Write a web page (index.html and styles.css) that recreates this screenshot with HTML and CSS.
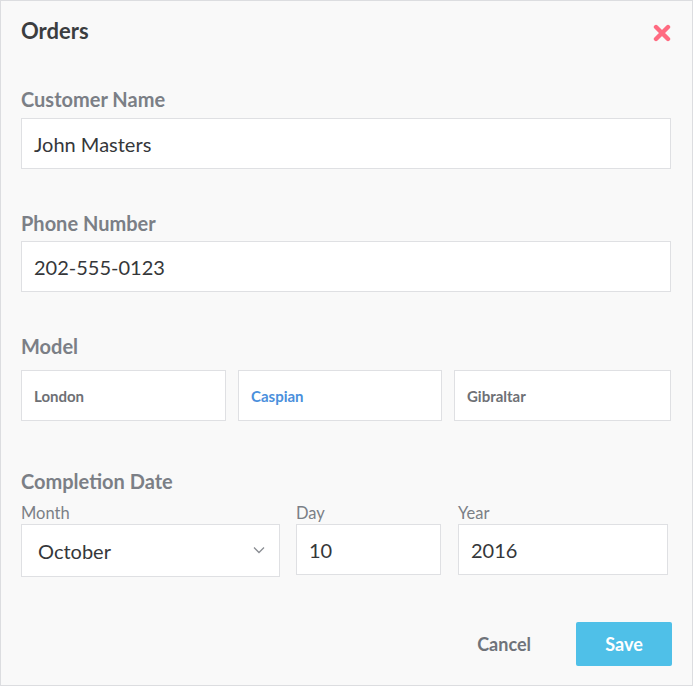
FILE: index.html
```html
<!DOCTYPE html>
<html>
<head>
<meta charset="utf-8">
<link rel="stylesheet" href="styles.css">
</head>
<body>
<div class="dialog">
  <div class="header">
    <h1 class="title">Orders</h1>
    <button class="close" aria-label="Close">
      <svg width="18" height="18" viewBox="0 0 18 18"><path d="M3 3 L15 15 M15 3 L3 15" stroke="#ff6b81" stroke-width="4.4" stroke-linecap="round"/></svg>
    </button>
  </div>

  <div class="group g-customer">
    <label class="label">Customer Name</label>
    <div class="input">John Masters</div>
  </div>

  <div class="group g-phone">
    <label class="label">Phone Number</label>
    <div class="input">202-555-0123</div>
  </div>

  <div class="group g-model">
    <label class="label label-model">Model</label>
    <div class="models">
      <div class="model">London</div>
      <div class="model active">Caspian</div>
      <div class="model">Gibraltar</div>
    </div>
  </div>

  <div class="group g-date">
    <label class="label">Completion Date</label>
    <div class="date-row">
      <div class="date-col">
        <span class="sublabel">Month</span>
        <div class="select">October
          <svg class="chev" width="12" height="8" viewBox="0 0 12 8"><path d="M1 1.5 L6 6.5 L11 1.5" fill="none" stroke="#8a8d93" stroke-width="1.3"/></svg>
        </div>
      </div>
      <div class="date-col">
        <span class="sublabel">Day</span>
        <div class="input small">10</div>
      </div>
      <div class="date-col col-year">
        <span class="sublabel">Year</span>
        <div class="input small">2016</div>
      </div>
    </div>
  </div>

  <div class="footer">
    <button class="btn-cancel">Cancel</button>
    <button class="btn-save">Save</button>
  </div>
</div>
</body>
</html>
```
FILE: styles.css
```css
* { box-sizing: border-box; }
html, body { margin: 0; padding: 0; }
body {
  font-family: Lato, "Noto Sans", "Liberation Sans", sans-serif;
  background: #ffffff;
}
.dialog {
  width: 693px;
  height: 686px;
  background: #f9f9f9;
  border: 1px solid #dcdde0;
  padding: 17px 21px 0 20px;
}
.header {
  display: flex;
  justify-content: space-between;
  align-items: center;
  height: 26px;
}
.title {
  margin: 0;
  font-size: 22px;
  line-height: 26px;
  font-weight: 700;
  color: #3b3d40;
}
.close {
  border: 0;
  background: none;
  padding: 0;
  width: 18px;
  height: 18px;
  margin-top: 4px;
  display: block;
}
.close svg { display: block; }
.label {
  display: block;
  font-size: 20px;
  line-height: 22px;
  font-weight: 700;
  color: #7b7f86;
}
.g-customer { margin-top: 44px; }
.g-phone { margin-top: 43px; }
.g-model { margin-top: 43px; }
.g-date { margin-top: 49px; }
.g-customer .label { margin-bottom: 8px; }
.g-phone .label { margin-bottom: 7px; }
.label-model { margin-bottom: 13px; }
.input {
  height: 51px;
  background: #fff;
  border: 1px solid #dfe0e3;
  padding: 0 12px;
  display: flex;
  align-items: center;
  font-size: 20px;
  color: #35373a;
}
.models {
  display: grid;
  grid-template-columns: 205px 204px 217px;
  column-gap: 12px;
}
.model {
  height: 51px;
  background: #fff;
  border: 1px solid #dfe0e3;
  padding: 0 12px;
  display: flex;
  align-items: center;
  font-size: 15px;
  font-weight: 700;
  color: #6e7075;
}
.model.active { color: #4a8fdc; }
.date-row {
  display: grid;
  grid-template-columns: 259px 145px 211px;
  column-gap: 16px;
  margin-top: 11px;
}
.col-year { margin-left: 1px; }
.date-col { display: flex; flex-direction: column; }
.sublabel {
  font-size: 16.5px;
  line-height: 20px;
  color: #7b7f86;
  margin-bottom: 1px;
}
.select {
  height: 53px;
  background: #fff;
  border: 1px solid #dfe0e3;
  padding: 0 14px 0 16px;
  display: flex;
  align-items: center;
  justify-content: space-between;
  font-size: 20px;
  color: #35373a;
}
.chev { margin-top: -2px; }
.input.small { height: 51px; }
.footer {
  display: flex;
  justify-content: flex-end;
  align-items: center;
  margin-top: 45px;
  margin-right: -1px;
}
.btn-cancel {
  border: 0;
  background: none;
  font-family: inherit;
  font-size: 18px;
  font-weight: 700;
  color: #6f737a;
  padding: 0;
  margin-right: 45px;
}
.btn-save {
  border: 0;
  width: 96px;
  height: 44px;
  border-radius: 2px;
  background: #4fc0e8;
  color: #fff;
  font-family: inherit;
  font-size: 18px;
  font-weight: 700;
}
```
